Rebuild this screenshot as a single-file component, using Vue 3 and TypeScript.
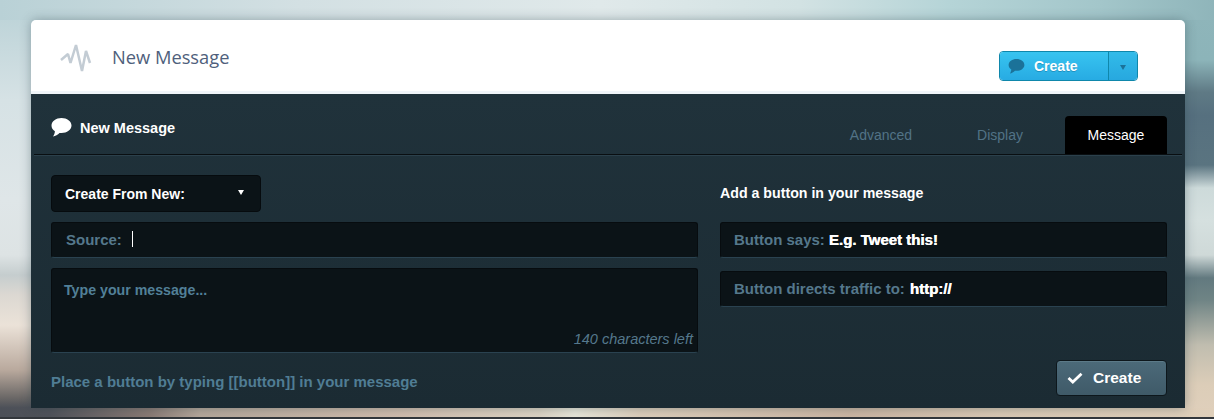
<script setup lang="ts">
const tabs: { label: string; active?: boolean }[] = [
  { label: 'Advanced' },
  { label: 'Display' },
  { label: 'Message', active: true }
]
</script>

<template>
  <div class="page">
    <div class="card">
      <header class="top">
        <div class="brand">
          <svg class="pulse" width="33" height="32" viewBox="0 0 33 32" fill="none">
            <path d="M1 18 L8 12 L10.500 21 L16 3 L22 29 L26 9 L30 21" stroke="#c3ccd4" stroke-width="2.500" stroke-linejoin="bevel" />
          </svg>
          <span class="title">New Message</span>
        </div>
        <div class="split">
          <button class="split-main" type="button">
            <svg width="17" height="15" viewBox="0 0 21 19"><path d="M10.500 0C16 0 20.500 3.300 20.500 7.500C20.500 11.700 16 15 10.500 15C9.800 15 9.200 15 8.500 14.900C6.800 16.800 4.500 18 2 18.500C3.200 17 3.800 14.800 3.900 13.200C1.600 11.800 0.500 9.800 0.500 7.500C0.500 3.300 5 0 10.500 0Z" fill="#1b7299" /></svg>
            <span>Create</span>
          </button>
          <button class="split-caret" type="button"><i></i></button>
        </div>
      </header>

      <section class="panel">
        <div class="tabbar">
          <div class="heading">
            <svg width="21" height="19" viewBox="0 0 21 19"><path d="M10.500 0C16 0 20.500 3.300 20.500 7.500C20.500 11.700 16 15 10.500 15C9.800 15 9.200 15 8.500 14.900C6.800 16.800 4.500 18 2 18.500C3.200 17 3.800 14.800 3.900 13.200C1.600 11.800 0.500 9.800 0.500 7.500C0.500 3.300 5 0 10.500 0Z" fill="#fff" /></svg>
            <span>New Message</span>
          </div>
          <nav class="tabs">
            <a v-for="t in tabs" :key="t.label" class="tab" :class="{ active: t.active }">{{ t.label }}</a>
          </nav>
        </div>

        <div class="body">
          <div class="left">
            <div class="select">
              <span>Create From New:</span>
              <i class="select-caret"></i>
            </div>
            <div class="field source">
              <span class="label">Source:</span>
              <i class="cursor"></i>
            </div>
            <div class="field message">
              <span class="placeholder">Type your message...</span>
              <span class="counter">140 characters left</span>
            </div>
            <p class="hint">Place a button by typing [[button]] in your message</p>
          </div>
          <div class="right">
            <h3 class="add">Add a button in your message</h3>
            <div class="field btn-field says">
              <span class="label">Button says:</span>
              <span class="value">E.g. Tweet this!</span>
            </div>
            <div class="field btn-field traffic">
              <span class="label">Button directs traffic to:</span>
              <span class="value">http://</span>
            </div>
            <div class="actions">
              <button class="submit" type="button">
                <svg width="16" height="12" viewBox="0 0 16 12" fill="none"><path d="M1.500 6 L5.800 10 L14.500 1.800" stroke="#fff" stroke-width="2.800" /></svg>
                <span>Create</span>
              </button>
            </div>
          </div>
        </div>
      </section>
    </div>
  </div>
</template>

<style>
html, body { margin: 0; padding: 0; background: #33373c; }
</style>

<style scoped>
.page {
  box-sizing: border-box;
  width: 1214px;
  height: 419px;
  overflow: hidden;
  padding: 20px 29px 11px 31px;
  font-family: "Liberation Sans", Arial, sans-serif;
  background:
    linear-gradient(#33373c, #33373c) 0 417px / 100% 2px no-repeat,
    linear-gradient(to right, #4c5058 0, #4f5259 50px, #8a7a74 150px, #b5a79a 200px, #d0bcac 400px, #dcd3c3 540px, #e8e6d8 575px, #dccdba 640px, #cbb5a2 850px, #d9c8b3 1000px, #dfcfba 1214px) 0 408px / 100% 9px no-repeat,
    linear-gradient(to right, #b9d1d6 0, #d3e0e3 300px, #e0e9ea 600px, #d2e2e3 800px, #b5d4d7 950px, #a3c6ca 1100px, #8fb5ba 1214px) 0 0 / 100% 20px no-repeat,
    linear-gradient(to bottom, #8fb5ba 0, #8cb4b9 60px, #5f7a85 92px, #56707f 115px, #5a7480 165px, #cddada 188px, #d5e0df 220px, #cfd9d8 255px, #62797f 278px, #6f8485 300px, #c0bdaf 345px, #dccdb8 385px, #e0d0bc 419px) 1175px 0 / 39px 419px no-repeat,
    linear-gradient(to bottom, #b9d1d6 0, #d6e2e5 100px, #dfe6e8 200px, #dde3e4 255px, #c5cdce 275px, #dcd8d2 295px, #ebe2d8 325px, #b9a99d 370px, #6a6766 398px, #4c5058 408px) 0 0 / 41px 419px no-repeat;
}
.card {
  height: 388px;
  display: flex;
  flex-direction: column;
  border-radius: 5px 5px 0 0;
  box-shadow: 0 0 11px rgba(40, 60, 70, 0.38);
}
.top {
  height: 71px;
  flex: none;
  display: flex;
  justify-content: space-between;
  align-items: flex-start;
  background: #fff;
  border-radius: 5px 5px 0 0;
  border-bottom: 3px solid #f0f5f9;
  padding: 0 47px 0 29px;
}
.brand { display: flex; align-items: center; height: 73px; }
.pulse { margin-top: 2px; }
.title {
  margin-left: 19px;
  font-family: "Open Sans", sans-serif;
  font-size: 18.300px;
  color: #4f5f7c;
}
.split {
  display: flex;
  margin-top: 31px;
  height: 30px;
  box-sizing: border-box;
  border: 1px solid #0f87ab;
  border-radius: 4px;
  overflow: hidden;
}
.split button { border: 0; padding: 0; margin: 0; font-family: inherit; }
.split-main {
  width: 109px;
  display: flex;
  align-items: center;
  padding-left: 8px !important;
  background: linear-gradient(to bottom, #38c4f0, #27abe3);
  color: #fff;
  font-size: 14px;
  font-weight: 700;
  border-right: 1px solid #0f87ab !important;
  text-shadow: 0 1px 0 rgba(10, 90, 130, 0.4);
}
.split-main span { margin-left: 9px; }
.split-caret {
  width: 28px;
  display: flex;
  align-items: center;
  justify-content: center;
  background: linear-gradient(to bottom, #32bbe9, #27a8df);
}
.split-caret i {
  margin-top: 2px;
  border-left: 3.500px solid transparent;
  border-right: 3.500px solid transparent;
  border-top: 5px solid #1b7299;
}
.panel {
  flex: 1;
  display: flex;
  flex-direction: column;
  background: linear-gradient(to bottom, #20323b, #1b2b33);
}
.tabbar {
  height: 60px;
  margin: 0 3px;
  flex: none;
  display: flex;
  justify-content: space-between;
  align-items: flex-end;
  border-bottom: 1px solid #090e11;
  box-shadow: 0 1px 0 #2b404b;
  padding: 0 15px 0 17px;
}
.heading {
  align-self: flex-start;
  display: flex;
  align-items: center;
  height: 34px;
  margin-top: 16px;
  color: #fff;
  font-size: 14.500px;
  font-weight: 700;
}
.heading span { margin-left: 8px; padding-top: 1px; }
.tabs { display: flex; }
.tab {
  width: 88px;
  height: 38px;
  line-height: 39px;
  text-align: center;
  font-size: 14px;
  color: #527386;
}
.tab:first-child { margin-right: 31px; }
.tab:nth-child(2) { margin-right: 21px; }
.tab.active {
  width: 102px;
  background: #000;
  color: #fff;
  border-radius: 4px 4px 0 0;
}
.body {
  flex: 1;
  display: flex;
  padding: 20px 18px 0 20px;
}
.left { width: 647px; display: flex; flex-direction: column; }
.right { width: 447px; margin-left: 22px; display: flex; flex-direction: column; }
.select {
  box-sizing: border-box;
  width: 210px;
  height: 37px;
  background: #0b1317;
  border: 1px solid #060b0e;
  border-radius: 4px;
  display: flex;
  align-items: center;
  justify-content: space-between;
  padding: 1px 16px 0 13px;
  color: #fff;
  font-size: 14px;
  font-weight: 700;
}
.select-caret {
  margin-top: -4px;
  border-left: 3px solid transparent;
  border-right: 3px solid transparent;
  border-top: 5px solid #fff;
}
.field {
  box-sizing: border-box;
  background: #0b1317;
  border: 1px solid #070c0f;
  border-bottom: 1px solid #2a4250;
  border-radius: 3px;
}
.source {
  height: 36px;
  margin-top: 10px;
  display: flex;
  align-items: center;
  padding: 0 0 2px 14px;
}
.label { color: #55788c; font-size: 15px; font-weight: 700; }
.cursor { width: 1px; height: 16px; background: #fff; margin-left: 10px; }
.message {
  height: 85px;
  margin-top: 10px;
  display: flex;
  flex-direction: column;
  justify-content: space-between;
  padding: 13px 4px 5px 12px;
}
.placeholder { color: #528098; font-size: 14.200px; font-weight: 700; }
.counter { align-self: flex-end; color: #55788c; font-size: 14.500px; font-style: italic; }
.hint {
  margin: 20px 0 0;
  color: #507d94;
  font-size: 15px;
  font-weight: 700;
}
.add {
  margin: 0;
  height: 37px;
  line-height: 36px;
  color: #fff;
  font-size: 14.200px;
  font-weight: 700;
}
.btn-field {
  height: 36px;
  display: flex;
  align-items: center;
  padding: 0 0 2px 13px;
}
.says { margin-top: 10px; }
.says .value { margin-left: 4px; }
.traffic { margin-top: 13px; }
.value {
  margin-left: 5px;
  color: #fff;
  font-size: 15px;
  font-weight: 700;
  text-shadow: 0.400px 0 0 #fff;
}
.actions { display: flex; justify-content: flex-end; margin-top: 53px; }
.submit {
  box-sizing: border-box;
  width: 111px;
  height: 36px;
  display: flex;
  align-items: center;
  padding: 0 0 0 10px;
  background: linear-gradient(to bottom, #4c6a79, #3f5a68);
  border: 1px solid #0d171c;
  border-radius: 4px;
  color: #fff;
  font-family: inherit;
  font-size: 15.500px;
  font-weight: 700;
  box-shadow: inset 0 1px 0 #5c7a88;
}
.submit span { margin-left: 10px; }
</style>
